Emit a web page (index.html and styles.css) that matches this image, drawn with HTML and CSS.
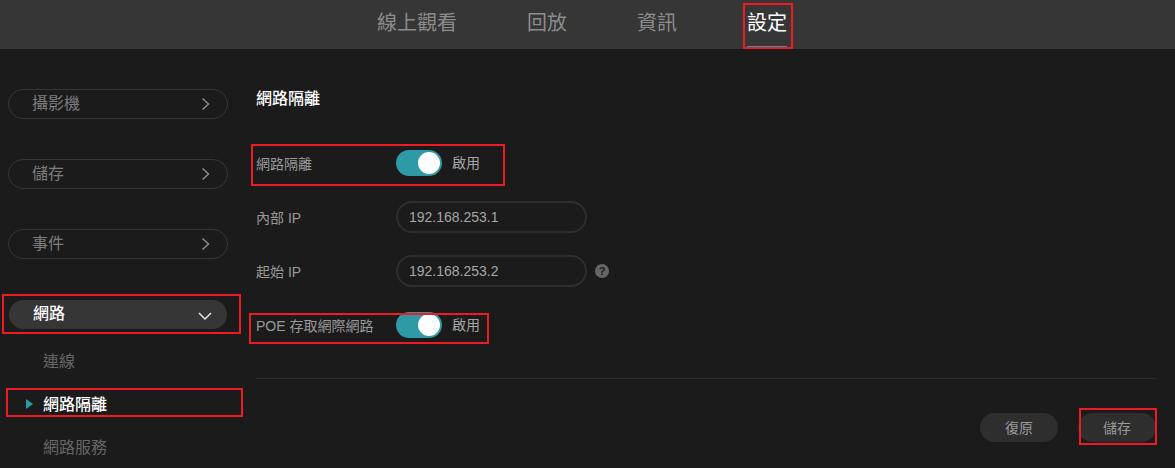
FILE: index.html
```html
<!DOCTYPE html>
<html lang="zh-Hant">
<head>
  <meta charset="UTF-8" />
  <meta name="viewport" content="width=device-width, initial-scale=1.0"/>
  <title>網路隔離</title>
  <link rel="stylesheet" href="styles.css">
</head>
<body>

  <!-- Top tabs -->
  <nav class="topbar">
    <a class="tab">線上觀看</a>
    <a class="tab">回放</a>
    <a class="tab">資訊</a>
    <a class="tab active">設定</a>
  </nav>

  <div class="main-container">
    <!-- Side menu -->
    <aside class="sidebar">
      <div class="menu-pill">
        <span>攝影機</span>
        <svg class="chevron" width="10" height="14" viewBox="0 0 10 14"><path d="M2.5 1.5 L8.5 7 L2.5 12.5"/></svg>
      </div>
      <div class="menu-pill">
        <span>儲存</span>
        <svg class="chevron" width="10" height="14" viewBox="0 0 10 14"><path d="M2.5 1.5 L8.5 7 L2.5 12.5"/></svg>
      </div>
      <div class="menu-pill">
        <span>事件</span>
        <svg class="chevron" width="10" height="14" viewBox="0 0 10 14"><path d="M2.5 1.5 L8.5 7 L2.5 12.5"/></svg>
      </div>
      <div class="menu-pill open">
        <span>網路</span>
        <svg class="chevron" width="14" height="10" viewBox="0 0 14 10"><path d="M1 2 L7 8 L13 2"/></svg>
      </div>
      <ul class="submenu">
        <li>連線</li>
        <li class="current">網路隔離</li>
        <li>網路服務</li>
      </ul>
    </aside>

    <!-- Form -->
    <section class="content">
      <h2>網路隔離</h2>
      <div class="form-row row-toggle">
        <label>網路隔離</label>
        <span class="switch"><span class="knob"></span></span>
        <span class="switch-text">啟用</span>
      </div>
      <div class="form-row row-internal">
        <label>內部 IP</label>
        <input type="text" value="192.168.253.1" />
      </div>
      <div class="form-row row-start">
        <label>起始 IP</label>
        <input type="text" value="192.168.253.2" />
        <span class="help">?</span>
      </div>
      <div class="form-row row-poe">
        <label>POE 存取網際網路</label>
        <span class="switch"><span class="knob"></span></span>
        <span class="switch-text">啟用</span>
      </div>
      <hr class="divider" />
      <div class="button-container">
        <button>復原</button>
        <button>儲存</button>
      </div>
    </section>
  </div>

  <!-- Red annotation boxes -->
  <div class="mark mark-tab"></div>
  <div class="mark mark-network"></div>
  <div class="mark mark-subitem"></div>
  <div class="mark mark-toggle"></div>
  <div class="mark mark-poe"></div>
  <div class="mark mark-save"></div>
</body>
</html>
```

FILE: styles.css
```css
body {
  font-family: "Liberation Sans", "Noto Sans CJK TC", sans-serif;
  margin: 0;
  padding: 0;
  width: 1175px;
  height: 468px;
  overflow: hidden;
  position: relative;
  background-color: #1b1b1b;
  color: #999;
  font-size: 14px;
}

/* Top tabs */
.topbar {
  height: 49px;
  box-sizing: border-box;
  padding-left: 377px;
  display: flex;
  gap: 70px;
  background-color: #363636;
}

.tab {
  height: 46px;
  line-height: 46px;
  font-size: 20px;
  color: #8c8c8c;
}

.tab.active {
  color: #fff;
  border-bottom: 1px solid #2d9aa5;
}

.main-container {
  display: flex;
}

/* Side menu */
.sidebar {
  width: 256px;
  flex-shrink: 0;
  padding-top: 40px;
  box-sizing: border-box;
}

.menu-pill {
  width: 220px;
  height: 30px;
  margin: 0 0 40px 8px;
  padding: 0 17px 0 23px;
  box-sizing: border-box;
  display: flex;
  align-items: center;
  justify-content: space-between;
  border: 1px solid #363636;
  border-radius: 15px;
  font-size: 16px;
  color: #7d7d7d;
}

.menu-pill span {
  margin-top: -4px;
}

.chevron {
  fill: none;
  stroke: #8a8a8a;
  stroke-width: 1.5;
}

.menu-pill.open {
  width: 218px;
  height: 29px;
  margin: 41px 0 0 9px;
  padding: 0 15px 0 24px;
  border: none;
  background-color: #363636;
  color: #fff;
  font-weight: 500;
}

.menu-pill.open span {
  margin-top: -5px;
}

.menu-pill.open .chevron {
  stroke: #e6e6e6;
  margin-top: 2px;
}

.submenu {
  list-style: none;
  margin: 0;
  padding: 22px 0 0 43px;
  font-size: 16px;
  color: #666;
}

.submenu li {
  height: 22px;
  line-height: 22px;
  margin-bottom: 21px;
  position: relative;
}

.submenu li.current {
  color: #fff;
  font-weight: 500;
}

.submenu li.current::before {
  content: "";
  position: absolute;
  left: -17px;
  top: 5px;
  border-left: 7px solid #2d9aa5;
  border-top: 5px solid transparent;
  border-bottom: 5px solid transparent;
}

/* Form */
.content {
  flex: 1;
  padding-right: 19px;
}

.content h2 {
  margin: 39px 0 0;
  height: 22px;
  line-height: 22px;
  font-size: 16px;
  font-weight: 500;
  color: #fff;
}

.form-row {
  display: flex;
  align-items: center;
}

.form-row label {
  width: 140px;
  color: #999;
}

.row-toggle { margin-top: 40px; height: 26px; }
.row-internal { margin-top: 25px; height: 32px; }
.row-start { margin-top: 22px; height: 32px; }
.row-poe { margin-top: 25px; height: 26px; }

.switch {
  width: 46px;
  height: 26px;
  border-radius: 13px;
  background-color: #2d9aa5;
  display: flex;
  align-items: center;
  justify-content: flex-end;
  padding-right: 2px;
  box-sizing: border-box;
}

.knob {
  width: 22px;
  height: 22px;
  border-radius: 50%;
  background-color: #fff;
}

.switch-text {
  margin-left: 10px;
  margin-top: -2px;
  color: #a6a6a6;
}

.form-row input {
  width: 191px;
  height: 32px;
  box-sizing: border-box;
  padding: 0 11px;
  background: transparent;
  border: 2px solid #2e2e2e;
  border-radius: 16px;
  outline: none;
  font-family: inherit;
  font-size: 14px;
  color: #a6a6a6;
}

.help {
  width: 14px;
  height: 14px;
  margin-left: 8px;
  border-radius: 50%;
  background-color: #666;
  color: #1b1b1b;
  font-size: 11px;
  font-weight: bold;
  line-height: 14px;
  text-align: center;
}

.divider {
  margin: 40px 0 0;
  border: none;
  border-top: 1px solid #2c2c2c;
}

.button-container {
  margin-top: 34px;
  display: flex;
  justify-content: flex-end;
  gap: 20px;
}

.button-container button {
  width: 78px;
  height: 29px;
  border: none;
  border-radius: 15px;
  background-color: #2e2e2e;
  font-family: inherit;
  font-size: 14px;
  color: #999;
  padding: 0 0 2px;
}

/* Red annotation boxes */
.mark {
  position: absolute;
  box-sizing: border-box;
  border: 2px solid #ed1c24;
}

.mark-tab { left: 743px; top: 3px; width: 50px; height: 46px; }
.mark-network { left: 2px; top: 294px; width: 239px; height: 40px; }
.mark-subitem { left: 6px; top: 388px; width: 237px; height: 29px; }
.mark-toggle { left: 251px; top: 144px; width: 254px; height: 42px; }
.mark-poe { left: 249px; top: 313px; width: 240px; height: 31px; }
.mark-save { left: 1079px; top: 408px; width: 78px; height: 37px; }
```
